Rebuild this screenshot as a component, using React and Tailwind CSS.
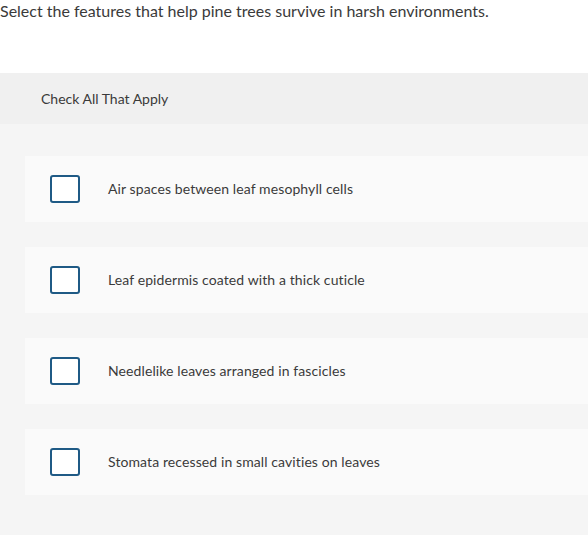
import React from "react";

const options = [
  "Air spaces between leaf mesophyll cells",
  "Leaf epidermis coated with a thick cuticle",
  "Needlelike leaves arranged in fascicles",
  "Stomata recessed in small cavities on leaves",
];

const App = () => {
  return (
    <div className="w-[588px] h-[535px] overflow-hidden bg-[#f5f5f5] text-[#3a3a3a]" style={{ fontFamily: "Lato, 'Open Sans', sans-serif" }}>
      <div className="bg-white h-[73px] pt-[1px]">
        <p className="text-[16px] leading-[20px]">
          Select the features that help pine trees survive in harsh environments.
        </p>
      </div>
      <div className="h-[51px] bg-[#f0f0f0] flex items-center pl-[41px]">
        <span className="text-[14px]">Check All That Apply</span>
      </div>
      <div className="flex flex-col gap-[25px] pt-[32px] pl-[25px]">
        {options.map((opt) => (
          <div key={opt} className="h-[66px] bg-[#fafafa] flex items-center">
            <div className="ml-[25px] w-[30px] h-[28px] border-2 border-[#1f5a85] rounded-[3px] bg-white shrink-0" />
            <span className="ml-[28px] text-[14px] tracking-[0.1px] pb-[1px]">{opt}</span>
          </div>
        ))}
      </div>
    </div>
  );
};

export default App;
